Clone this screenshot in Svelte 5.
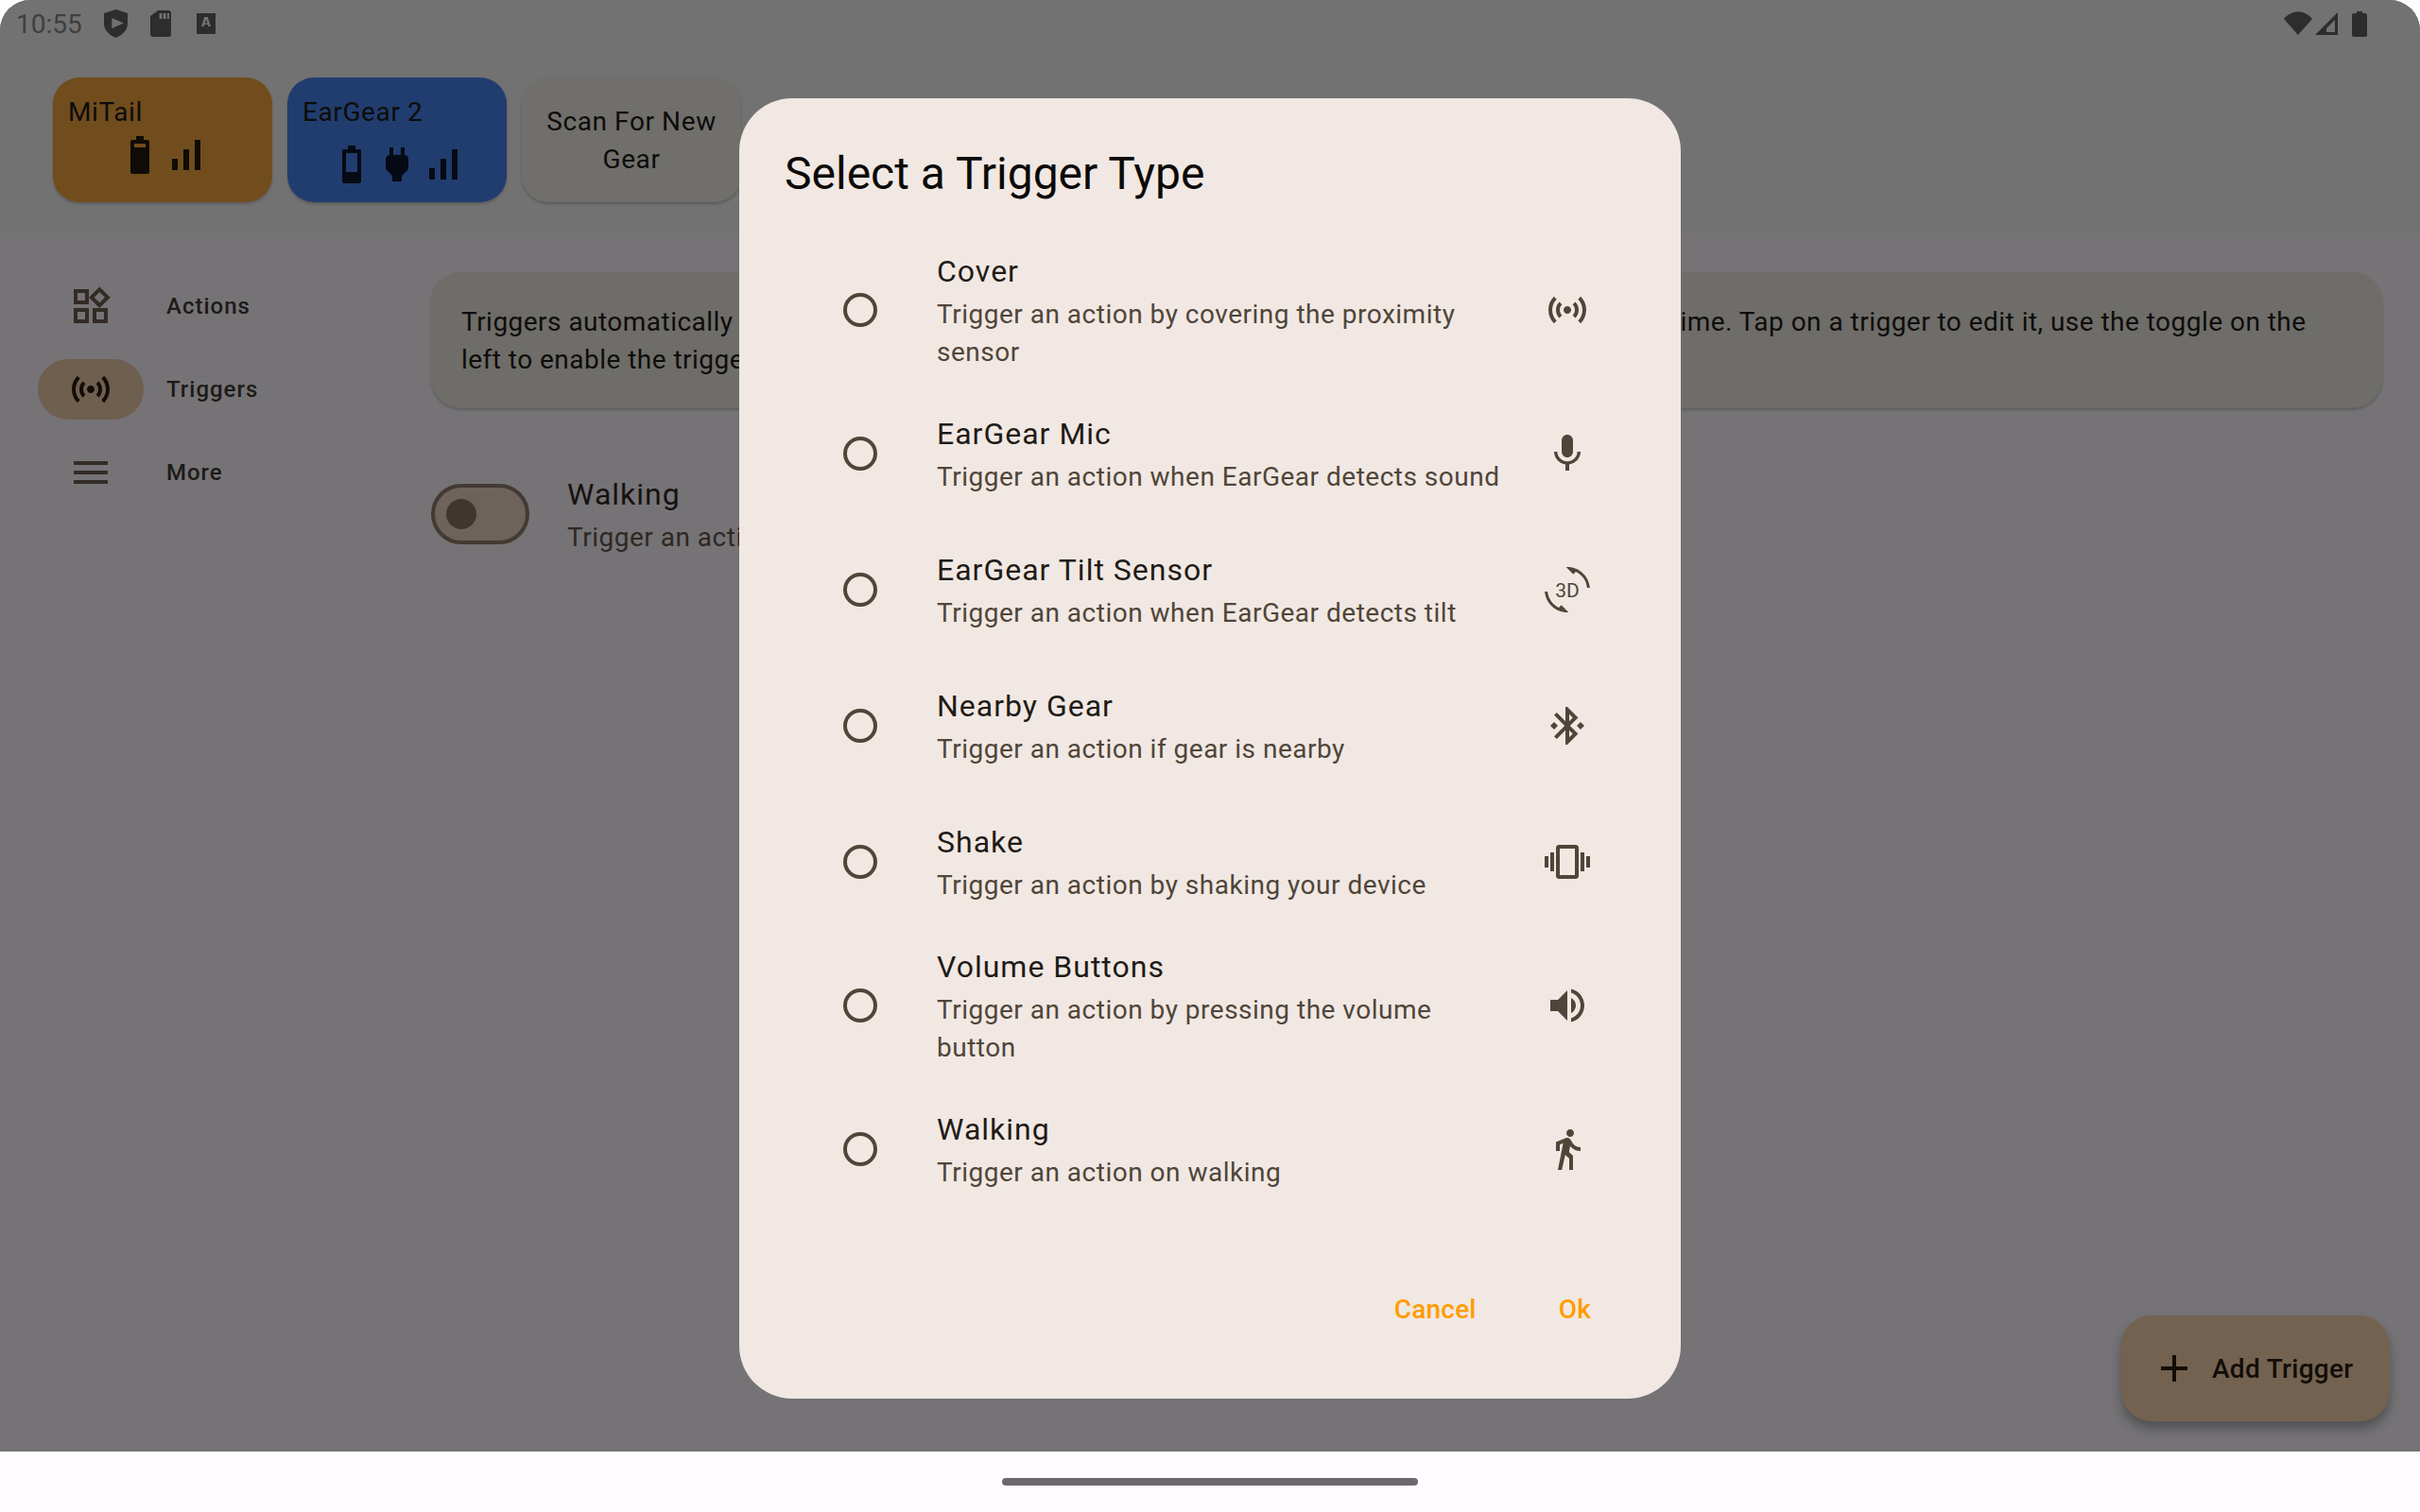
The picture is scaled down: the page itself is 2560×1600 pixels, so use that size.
<script>
  const icons = {
    sensors: 'M7.76 16.24C6.67 15.16 6 13.66 6 12s.67-3.16 1.76-4.24l1.42 1.42C8.45 9.9 8 10.9 8 12c0 1.1.45 2.1 1.17 2.83l-1.41 1.41zm8.48 0C17.33 15.16 18 13.66 18 12s-.67-3.16-1.76-4.24l-1.42 1.42C15.55 9.9 16 10.9 16 12c0 1.1-.45 2.1-1.17 2.83l1.41 1.41zM12 10c-1.1 0-2 .9-2 2s.9 2 2 2 2-.9 2-2-.9-2-2-2zm8 2c0 2.21-.9 4.21-2.35 5.65l1.42 1.42C20.88 17.26 22 14.76 22 12s-1.12-5.26-2.93-7.07l-1.42 1.42C19.1 7.79 20 9.79 20 12zM6.35 6.35L4.93 4.93C3.12 6.74 2 9.24 2 12s1.12 5.26 2.93 7.07l1.42-1.42C4.9 16.21 4 14.21 4 12s.9-4.21 2.35-5.65z',
    mic: 'M12 14c1.66 0 2.99-1.34 2.99-3L15 5c0-1.66-1.34-3-3-3S9 3.34 9 5v6c0 1.66 1.34 3 3 3zm5.3-3c0 3-2.54 5.1-5.3 5.1S6.7 14 6.7 11H5c0 3.41 2.72 6.23 6 6.72V21h2v-3.28c3.28-.48 6-3.3 6-6.72h-1.7z',
    rotate: 'M7.52 21.48C4.25 19.94 1.91 16.76 1.55 13H.05C.56 19.16 5.71 24 12 24l.66-.03-3.81-3.81-1.33 1.32zM12 0l-.66.03 3.81 3.81 1.33-1.33c3.27 1.55 5.61 4.72 5.96 8.48h1.5C23.44 4.84 18.29 0 12 0z',
    bluetooth: 'M7 12l-2-2-2 2 2 2 2-2zm10.71-4.29L12 2h-1v7.59L6.41 5 5 6.41 10.59 12 5 17.59 6.41 19 11 14.41V22h1l5.71-5.71-4.3-4.29 4.3-4.29zM13 5.83l1.88 1.88L13 9.59V5.83zm1.88 10.46L13 18.17v-3.76l1.88 1.88zM19 10l-2 2 2 2 2-2-2-2z',
    vibration: 'M0 15h2V9H0v6zm3 2h2V7H3v10zm19-8v6h2V9h-2zm-3 8h2V7h-2v10zM16.5 3h-9C6.67 3 6 3.67 6 4.5v15c0 .83.67 1.5 1.5 1.5h9c.83 0 1.5-.67 1.5-1.5v-15c0-.83-.67-1.5-1.5-1.5zM16 19H8V5h8v14z',
    volume: 'M3 9v6h4l5 5V4L7 9H3zm13.5 3c0-1.77-1.02-3.29-2.5-4.03v8.05c1.48-.73 2.5-2.25 2.5-4.02zM14 3.23v2.06c2.89.86 5 3.54 5 6.71s-2.11 5.85-5 6.71v2.06c4.01-.91 7-4.49 7-8.77s-2.99-7.86-7-8.77z',
    walk: 'M13.5 5.5c1.1 0 2-.9 2-2s-.9-2-2-2-2 .9-2 2 .9 2 2 2zM9.8 8.9L7 23h2.1l1.8-8 2.1 2v6h2v-7.5l-2.1-2 .6-3C14.8 12 16.8 13 19 13v-2c-1.9 0-3.5-1-4.3-2.4l-1-1.6c-.4-.6-1-1-1.7-1-.3 0-.5.1-.8.1L6 8.3V13h2V9.6l1.8-.7',
    widgets: 'M16.66 4.52l2.83 2.83-2.83 2.83-2.83-2.83 2.83-2.83M9 5v4H5V5h4m10 10v4h-4v-4h4M9 15v4H5v-4h4m7.66-13.31L11 7.34 16.66 13l5.66-5.66-5.66-5.65zM11 3H3v8h8V3zm10 10h-8v8h8v-8zm-10 0H3v8h8v-8z',
    menu: 'M3 18h18v-2H3v2zm0-5h18v-2H3v2zm0-7v2h18V6H3z',
    plus: 'M19 13h-6v6h-2v-6H5v-2h6V5h2v6h6v2z',
    signal: 'M17 4h3v16h-3V4zM5 14h3v6H5v-6zm6-5h3v11h-3V9z',
    batteryHigh: 'M17 5v16c0 .55-.45 1-1 1H8c-.55 0-1-.45-1-1V5c0-.55.45-1 1-1h2V2h4v2h2c.55 0 1 .45 1 1zM15 6H9v2h6V6z',
    batteryMid: 'M17 5v16c0 .55-.45 1-1 1H8c-.55 0-1-.45-1-1V5c0-.55.45-1 1-1h2V2h4v2h2c.55 0 1 .45 1 1zM15 6H9v10h6V6z',
    plug: 'M16.01 7L16 3h-2v4h-4V3H8v4h-.01C7 6.99 6 7.99 6 8.99v5.49L9.5 18v3h5v-3l3.5-3.51v-5.5c0-1-1-2-1.99-1.99z'
  };

  const triggers = [
    { name: 'Cover', text: 'Trigger an action by covering the proximity sensor', icon: 'sensors', tall: true },
    { name: 'EarGear Mic', text: 'Trigger an action when EarGear detects sound', icon: 'mic' },
    { name: 'EarGear Tilt Sensor', text: 'Trigger an action when EarGear detects tilt', icon: 'rotate', label: '3D' },
    { name: 'Nearby Gear', text: 'Trigger an action if gear is nearby', icon: 'bluetooth' },
    { name: 'Shake', text: 'Trigger an action by shaking your device', icon: 'vibration' },
    { name: 'Volume Buttons', text: 'Trigger an action by pressing the volume button', icon: 'volume', tall: true },
    { name: 'Walking', text: 'Trigger an action on walking', icon: 'walk' }
  ];

  const nav = [
    { label: 'Actions', icon: 'widgets' },
    { label: 'Triggers', icon: 'sensors', active: true },
    { label: 'More', icon: 'menu' }
  ];
</script>

<div class="device">
  <div class="screen">
    <header class="top">
      <div class="status">
        <span class="time">10:55</span>
        <svg width="25" height="30" viewBox="0 0 18 30" preserveAspectRatio="none"><path fill-rule="evenodd" d="M9 0l9 4v11c0 7-4 12-9 15-5-3-9-8-9-15V4zM6 9v11l9-5.500z" /></svg>
        <svg width="22" height="28" viewBox="0 0 16 28" preserveAspectRatio="none"><path fill-rule="evenodd" d="M6 0h8c1 0 2 1 2 2v24c0 1-1 2-2 2H2c-1 0-2-1-2-2V6zM7 3v6h2V3zm3 0v6h2V3zm3 0v6h1.500V3z" /></svg>
        <svg class="letter" width="20" height="22" viewBox="0 0 14 22" preserveAspectRatio="none"><path fill-rule="evenodd" d="M0 0h14v22H0zM5.800 4L3.500 14h1.800l.4-2h2.600l.4 2h1.800L8.200 4zm.3 6.400L7 6.500l.9 3.900z" /></svg>
        <span class="grow"></span>
        <svg width="30" height="26" viewBox="0 0 30 26"><path d="M15 25L0 8c8-10 22-10 30 0z" /></svg>
        <svg class="cell" width="26" height="26" viewBox="0 0 26 26"><path fill-rule="evenodd" d="M25 1v24H1zM22 9L13 18v4h9z" /></svg>
        <svg class="batt" width="16" height="27" viewBox="0 0 16 27"><path d="M5 0h6v2h3c1 0 2 1 2 2v21c0 1-1 2-2 2H2c-1 0-2-1-2-2V4c0-1 1-2 2-2h3z" /></svg>
      </div>

      <div class="gear-row">
        <div class="gear orange">
          <span class="gear-name">MiTail</span>
          <div class="gear-icons">
            <svg viewBox="0 0 24 24"><path fill-rule="evenodd" d={icons.batteryHigh} /></svg>
            <svg viewBox="0 0 24 24"><path d={icons.signal} /></svg>
          </div>
        </div>
        <div class="gear blue">
          <span class="gear-name">EarGear 2</span>
          <div class="gear-icons low">
            <svg viewBox="0 0 24 24"><path fill-rule="evenodd" d={icons.batteryMid} /></svg>
            <svg viewBox="0 0 24 24"><path d={icons.plug} /></svg>
            <svg viewBox="0 0 24 24"><path d={icons.signal} /></svg>
          </div>
        </div>
        <div class="gear scan">Scan For New<br />Gear</div>
      </div>
    </header>

    <div class="body">
      <nav class="rail">
        {#each nav as item}
          <div class="rail-item">
            <span class="rail-icon" class:active={item.active}>
              <svg viewBox="0 0 24 24" width="48" height="48"><path d={icons[item.icon]} /></svg>
            </span>
            <span class="rail-label">{item.label}</span>
          </div>
        {/each}
      </nav>

      <main class="content">
        <div class="info">
          Triggers automatically send an action when your gear detects an event, so you can use them at any time. Tap on a trigger to edit it, use the toggle on the<br />
          left to enable the trigger.
        </div>
        <div class="row">
          <span class="switch"><span class="thumb"></span></span>
          <div>
            <div class="row-title">Walking</div>
            <div class="row-sub">Trigger an action on walking</div>
          </div>
        </div>
      </main>
    </div>

    <button class="fab">
      <svg viewBox="0 0 24 24" width="48" height="48"><path d={icons.plus} /></svg>
      Add Trigger
    </button>

    <div class="dialog">
      <h2>Select a Trigger Type</h2>
      <div class="options">
        {#each triggers as t}
          <div class="option" class:tall={t.tall}>
            <span class="radio"></span>
            <div class="option-text">
              <div class="option-name">{t.name}</div>
              <div class="option-desc">{t.text}</div>
            </div>
            <svg class="option-icon" viewBox="0 0 24 24" width="48" height="48">
              <path d={icons[t.icon]} />
              {#if t.label}<text x="12" y="16" text-anchor="middle">{t.label}</text>{/if}
            </svg>
          </div>
        {/each}
      </div>
      <div class="actions">
        <button>Cancel</button>
        <button>Ok</button>
      </div>
    </div>
  </div>
  <div class="navbar"><span class="handle"></span></div>
</div>

<style>
  :global(body) {
    margin: 0;
    background: #fffcff;
  }

  .device {
    width: 2560px;
    height: 1600px;
    display: flex;
    flex-direction: column;
    font-family: Roboto, sans-serif;
    color: #0e0c0a;
    overflow: hidden;
  }

  .screen {
    position: relative;
    flex: 1;
    background: #757376;
    border-radius: 32px 32px 0 0;
  }

  .top {
    height: 246px;
    background: #737272;
    border-radius: 32px 32px 0 0;
  }

  .status {
    height: 50px;
    padding: 0 56px 0 17px;
    display: flex;
    align-items: center;
    gap: 24px;
    box-sizing: border-box;
  }
  .status svg {
    fill: #2d2d2d;
    flex: none;
  }
  .time {
    font-size: 28px;
    color: #3f3f3f;
    margin-right: -1px;
  }
  .letter {
    margin-left: 3px;
  }
  .grow {
    flex: 1;
  }
  .cell {
    margin-left: -22px;
  }
  .batt {
    margin-left: -10px;
  }

  .gear-row {
    display: flex;
    gap: 16px;
    padding: 32px 0 0 56px;
  }
  .gear {
    width: 232px;
    height: 132px;
    box-sizing: border-box;
    border-radius: 28px;
    padding: 17px 16px 16px;
    font-size: 28px;
    line-height: 40px;
    letter-spacing: 0.6px;
    box-shadow: 0 2px 3px rgba(0, 0, 0, 0.2);
  }
  .orange {
    background: #714d1d;
  }
  .blue {
    background: #213d6f;
  }
  .scan {
    background: #706f6c;
    text-align: center;
    padding-top: 27px;
  }
  .gear-name {
    display: block;
  }
  .gear-icons {
    display: flex;
    justify-content: center;
    margin-top: 1px;
  }
  .gear-icons.low {
    margin-top: 11px;
  }
  .gear-icons svg {
    width: 48px;
    height: 48px;
    fill: #100b05;
  }
  .blue .gear-icons svg {
    fill: #050a14;
  }

  .body {
    display: flex;
    padding-top: 42px;
  }

  .rail {
    width: 456px;
    flex: none;
    display: flex;
    flex-direction: column;
    gap: 24px;
    box-sizing: border-box;
    padding: 4px 0 0 40px;
  }
  .rail-item {
    display: flex;
    align-items: center;
    gap: 24px;
    height: 64px;
  }
  .rail-icon {
    width: 112px;
    height: 64px;
    border-radius: 32px;
    display: flex;
    align-items: center;
    justify-content: center;
  }
  .rail-icon svg {
    fill: #332c25;
  }
  .rail-icon.active {
    background: #6f5f4f;
  }
  .rail-icon.active svg {
    fill: #120d07;
  }
  .rail-label {
    font-size: 24px;
    font-weight: 500;
    letter-spacing: 1px;
    color: #1d1a17;
  }

  .content {
    flex: 1;
    padding-right: 40px;
  }
  .info {
    height: 144px;
    box-sizing: border-box;
    padding: 33px 32px 0;
    background: #6e6d69;
    border-radius: 32px;
    font-size: 28px;
    line-height: 40px;
    letter-spacing: 0.47px;
    white-space: nowrap;
    overflow: hidden;
    box-shadow: 0 2px 3px rgba(0, 0, 0, 0.2);
  }

  .row {
    display: flex;
    align-items: center;
    gap: 40px;
    margin-top: 67px;
  }
  .switch {
    width: 104px;
    height: 64px;
    box-sizing: border-box;
    border: 4px solid #433a33;
    border-radius: 32px;
    background: #6e635c;
    display: flex;
    align-items: center;
    padding-left: 12px;
  }
  .thumb {
    width: 32px;
    height: 32px;
    border-radius: 50%;
    background: #40362f;
  }
  .row-title {
    font-size: 32px;
    line-height: 48px;
    letter-spacing: 1px;
    color: #151210;
    margin-bottom: 2px;
  }
  .row-sub {
    font-size: 28px;
    line-height: 40px;
    letter-spacing: 0.5px;
    color: #2e2823;
  }

  .fab {
    position: absolute;
    right: 32px;
    bottom: 32px;
    width: 284px;
    height: 112px;
    border: 0;
    border-radius: 32px;
    background: #736250;
    color: #120d07;
    font: 500 28px Roboto, sans-serif;
    letter-spacing: 0.3px;
    display: flex;
    align-items: center;
    gap: 16px;
    padding: 0 0 0 32px;
    box-shadow: 0 8px 12px rgba(0, 0, 0, 0.3);
  }
  .fab svg {
    fill: #120d07;
  }

  .dialog {
    position: absolute;
    left: 782px;
    top: 104px;
    width: 996px;
    height: 1376px;
    box-sizing: border-box;
    padding: 48px 48px 0;
    background: #f1e8e3;
    border-radius: 56px;
    display: flex;
    flex-direction: column;
  }
  h2 {
    margin: 0;
    font-size: 48px;
    font-weight: 400;
    line-height: 64px;
    color: #0c0a08;
  }
  .options {
    margin-top: 32px;
  }
  .option {
    height: 144px;
    display: flex;
    align-items: center;
    padding: 0 0 0 62px;
  }
  .option.tall {
    height: 160px;
  }
  .radio {
    width: 36px;
    height: 36px;
    box-sizing: border-box;
    border: 4px solid #4f4539;
    border-radius: 50%;
    flex: none;
  }
  .option-text {
    width: 610px;
    margin-left: 63px;
    flex: none;
  }
  .option-name {
    font-size: 32px;
    line-height: 48px;
    letter-spacing: 1px;
    color: #1f1b16;
    margin-bottom: 2px;
  }
  .option-desc {
    font-size: 28px;
    line-height: 40px;
    letter-spacing: 0.5px;
    color: #4f4539;
  }
  .option-icon {
    margin-left: 33px;
    flex: none;
    fill: #4f4539;
  }
  .option-icon text {
    font: 400 10.5px Roboto, sans-serif;
  }

  .actions {
    margin-top: auto;
    margin-bottom: 74px;
    display: flex;
    justify-content: flex-end;
    gap: 87px;
    padding-right: 47px;
  }
  .actions button {
    border: 0;
    background: none;
    padding: 0;
    font: 500 28px Roboto, sans-serif;
    letter-spacing: 0.2px;
    line-height: 40px;
    color: #fe9d00;
  }

  .navbar {
    height: 64px;
    flex: none;
    background: #fffcff;
    display: flex;
    justify-content: center;
    align-items: center;
  }
  .handle {
    width: 440px;
    height: 8px;
    border-radius: 4px;
    background: #6d686d;
  }
</style>
